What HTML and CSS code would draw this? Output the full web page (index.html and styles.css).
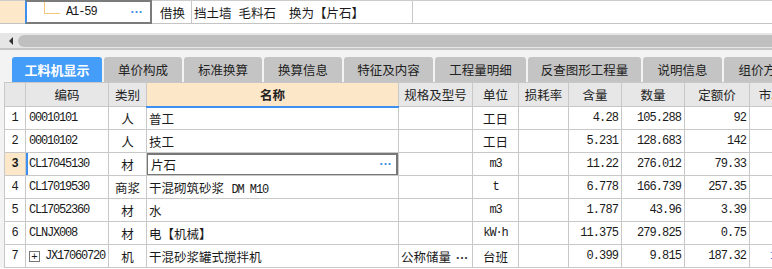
FILE: index.html
```html
<!DOCTYPE html>
<html lang="zh-CN">

<head>
    <meta charset="UTF-8">
    <meta name="viewport" content="width=device-width, initial-scale=1.0">
    <title>工料机显示</title>
    <link rel="stylesheet" href="styles.css">
</head>

<body>
    <div class="topline">
        <div class="tl-num"></div>
        <div class="tl-code">
            <span class="tree"></span>
            <span class="mono">A1-59</span>
            <span class="dots">···</span>
        </div>
        <div class="tl-type">借换</div>
        <div class="tl-name">
            <span>挡土墙</span><span class="sp">毛料石</span><span class="sp2">换为【片石】</span>
        </div>
        <div class="tl-rest"></div>
    </div>

    <div class="hscroll">
        <span class="arrow"></span>
        <span class="thumb"></span>
    </div>

    <div class="panel">
        <div class="tabs">
            <div class="tab active" style="width: 90px;">工料机显示</div>
            <div class="tab" style="width: 78px;">单价构成</div>
            <div class="tab" style="width: 78px;">标准换算</div>
            <div class="tab" style="width: 78px;">换算信息</div>
            <div class="tab" style="width: 89px;">特征及内容</div>
            <div class="tab" style="width: 91px;">工程量明细</div>
            <div class="tab" style="width: 113px;">反查图形工程量</div>
            <div class="tab" style="width: 79px;">说明信息</div>
            <div class="tab" style="width: 79px;">组价方案</div>
        </div>

        <table class="grid">
            <colgroup>
                <col style="width: 21px;">
                <col style="width: 83px;">
                <col style="width: 38px;">
                <col style="width: 252px;">
                <col style="width: 74px;">
                <col style="width: 46px;">
                <col style="width: 50px;">
                <col style="width: 53px;">
                <col style="width: 63px;">
                <col style="width: 65px;">
                <col style="width: 56px;">
            </colgroup>
            <thead>
                <tr>
                    <th></th>
                    <th>编码</th>
                    <th>类别</th>
                    <th class="name-head">名称</th>
                    <th>规格及型号</th>
                    <th>单位</th>
                    <th>损耗率</th>
                    <th>含量</th>
                    <th>数量</th>
                    <th>定额价</th>
                    <th>市场价</th>
                </tr>
            </thead>
            <tbody>
                <tr>
                    <td class="num">1</td>
                    <td class="code">00010101</td>
                    <td class="kind">人</td>
                    <td class="name">普工</td>
                    <td></td>
                    <td class="unit">工日</td>
                    <td></td>
                    <td class="val">4.28</td>
                    <td class="val">105.288</td>
                    <td class="val">92</td>
                    <td></td>
                </tr>
                <tr>
                    <td class="num">2</td>
                    <td class="code">00010102</td>
                    <td class="kind">人</td>
                    <td class="name">技工</td>
                    <td></td>
                    <td class="unit">工日</td>
                    <td></td>
                    <td class="val">5.231</td>
                    <td class="val">128.683</td>
                    <td class="val">142</td>
                    <td></td>
                </tr>
                <tr class="current">
                    <td class="num">3</td>
                    <td class="code">CL17045130</td>
                    <td class="kind">材</td>
                    <td class="name editing">
                        <div class="cell-edit"><span>片石</span><span class="dots">···</span></div>
                    </td>
                    <td></td>
                    <td class="unit mono">m3</td>
                    <td></td>
                    <td class="val">11.22</td>
                    <td class="val">276.012</td>
                    <td class="val">79.33</td>
                    <td></td>
                </tr>
                <tr>
                    <td class="num">4</td>
                    <td class="code">CL17019530</td>
                    <td class="kind">商浆</td>
                    <td class="name">干混砌筑砂浆 <span class="mono">DM M10</span></td>
                    <td></td>
                    <td class="unit mono">t</td>
                    <td></td>
                    <td class="val">6.778</td>
                    <td class="val">166.739</td>
                    <td class="val">257.35</td>
                    <td></td>
                </tr>
                <tr>
                    <td class="num">5</td>
                    <td class="code">CL17052360</td>
                    <td class="kind">材</td>
                    <td class="name">水</td>
                    <td></td>
                    <td class="unit mono">m3</td>
                    <td></td>
                    <td class="val">1.787</td>
                    <td class="val">43.96</td>
                    <td class="val">3.39</td>
                    <td></td>
                </tr>
                <tr>
                    <td class="num">6</td>
                    <td class="code">CLNJX008</td>
                    <td class="kind">材</td>
                    <td class="name">电【机械】</td>
                    <td></td>
                    <td class="unit mono">kW·h</td>
                    <td></td>
                    <td class="val">11.375</td>
                    <td class="val">279.825</td>
                    <td class="val">0.75</td>
                    <td></td>
                </tr>
                <tr>
                    <td class="num">7</td>
                    <td class="code"><span class="expand">+</span>JX17060720</td>
                    <td class="kind">机</td>
                    <td class="name">干混砂浆罐式搅拌机</td>
                    <td class="spec">公称储量<span class="more">···</span></td>
                    <td class="unit">台班</td>
                    <td></td>
                    <td class="val">0.399</td>
                    <td class="val">9.815</td>
                    <td class="val">187.32</td>
                    <td class="market">187.32</td>
                </tr>
            </tbody>
        </table>
    </div>
</body>

</html>
```

FILE: styles.css
```css
* {
    margin: 0;
    padding: 0;
    box-sizing: border-box;
}

body {
    width: 772px;
    height: 269px;
    overflow: hidden;
    background-color: #FFFFFF;
    font-family: "Liberation Mono", "Noto Sans CJK SC", monospace;
    font-size: 12px;
    color: #1a1a1a;
}

.mono {
    font-family: "Liberation Mono", monospace;
    font-size: 12px;
    letter-spacing: -1.1px;
}

/* top strip: parent row of the quota */

.topline {
    display: grid;
    grid-template-columns: 25px 127px 40px 221px 1fr;
    height: 24px;
    border-top: 1px solid #cccccc;
    border-bottom: 1px solid #c4c4c4;
    font-family: "Noto Sans CJK SC", sans-serif;
    font-size: 12.5px;
}

.tl-num {
    background-color: #fde8c9;
}

.tl-code {
    display: flex;
    align-items: center;
    border: 2px solid #7b7b7b;
    border-left-color: #3f8ff0;
    margin-top: -1px;
    margin-bottom: -1px;
}

.tree {
    align-self: flex-start;
    width: 16px;
    height: 12px;
    margin-left: 17px;
    margin-right: 6px;
    border-left: 1px solid #f6c67c;
    border-bottom: 1px solid #f6c67c;
}

.dots {
    margin-left: auto;
    margin-right: 7px;
    color: #3a8ee6;
    font-weight: bold;
    letter-spacing: 0;
    font-family: "Liberation Sans", sans-serif;
}

.tl-type {
    display: flex;
    align-items: center;
    padding-left: 8px;
    border-right: 1px solid #c8c8c8;
}

.tl-name {
    display: flex;
    align-items: center;
    padding-left: 2px;
    border-right: 1px solid #c8c8c8;
    white-space: nowrap;
}

.tl-name .sp {
    margin-left: 7px;
}

.tl-name .sp2 {
    margin-left: 13px;
}

/* horizontal scrollbar */

.hscroll {
    display: flex;
    align-items: center;
    margin-top: 9px;
    height: 15px;
    background-color: #e6e6e6;
}

.arrow {
    width: 0;
    height: 0;
    margin-left: 9px;
    border-top: 4px solid transparent;
    border-bottom: 4px solid transparent;
    border-right: 4px solid #333333;
}

.thumb {
    flex: 1;
    height: 12px;
    margin-left: 5px;
    border-radius: 6px 0 0 6px;
    background-color: #bfbfbf;
}

/* bottom panel */

.panel {
    border-top: 2px solid #c6c6c6;
    background-color: #f3f3f3;
    padding-top: 7px;
    padding-left: 4px;
    height: 220px;
    overflow: hidden;
}

.tabs {
    display: flex;
    gap: 2px;
    padding-left: 8px;
    height: 25px;
    white-space: nowrap;
}

.tab {
    flex-shrink: 0;
    display: flex;
    align-items: center;
    justify-content: center;
    overflow: hidden;
    border-radius: 3px 3px 0 0;
    background-color: #c4c4c4;
    font-family: "Noto Sans CJK SC", sans-serif;
    font-size: 12.5px;
    color: #222222;
}

.tab.active {
    background-color: #449df8;
    color: #FFFFFF;
    font-weight: bold;
    font-size: 13px;
}

/* grid */

.grid {
    table-layout: fixed;
    width: 801px;
    border-collapse: collapse;
    background-color: #FFFFFF;
}

.grid th,
.grid td {
    height: 23px;
    border: 1px solid #c8c8c8;
    padding: 0;
    white-space: nowrap;
    overflow: hidden;
    vertical-align: middle;
}

.grid th {
    height: 24px;
    background-color: #e7e7e7;
    font-family: "Noto Sans CJK SC", sans-serif;
    font-weight: normal;
    font-size: 12.5px;
    text-align: center;
    color: #222222;
}

.grid th.name-head {
    background-color: #fde7c9;
    font-weight: bold;
    border-bottom: 2px solid #3f8ff0;
}

.num {
    text-align: center;
    font-size: 12px;
}

.code {
    padding-left: 3px !important;
    font-size: 12px;
    letter-spacing: -1.2px;
}

.kind,
.unit,
.name,
.spec {
    font-size: 12.5px;
}

.kind,
.unit {
    text-align: center;
}

.unit.mono {
    font-size: 12px;
}

.name {
    padding-left: 2px !important;
}

.spec {
    padding-left: 2px !important;
}

.more {
    margin-left: 5px;
    font-family: "Liberation Sans", sans-serif;
    font-weight: bold;
    color: #333333;
}

.val {
    text-align: right;
    padding-right: 3px !important;
    font-size: 12px;
    letter-spacing: -0.9px;
}

.market {
    padding-left: 20px !important;
    color: #2f6fe0;
    font-size: 12px;
}

.current .num {
    background-color: #fde7c9;
    font-weight: bold;
}

.current .code {
    box-shadow: inset 2px 0 0 #3f8ff0;
}

.name.editing {
    padding: 0 !important;
}

.cell-edit {
    display: flex;
    align-items: center;
    height: 23px;
    padding-left: 3px;
    border: 2px solid #777777;
    margin: -1px 0 -1px -1px;
}

.cell-edit .dots {
    margin-right: 4px;
}

.expand {
    display: inline-flex;
    align-items: center;
    justify-content: center;
    width: 11px;
    height: 11px;
    margin-right: 5px;
    border: 1px solid #777777;
    font-family: "Liberation Sans", sans-serif;
    font-size: 11px;
    letter-spacing: 0;
    line-height: 1;
    vertical-align: -1px;
}
```
